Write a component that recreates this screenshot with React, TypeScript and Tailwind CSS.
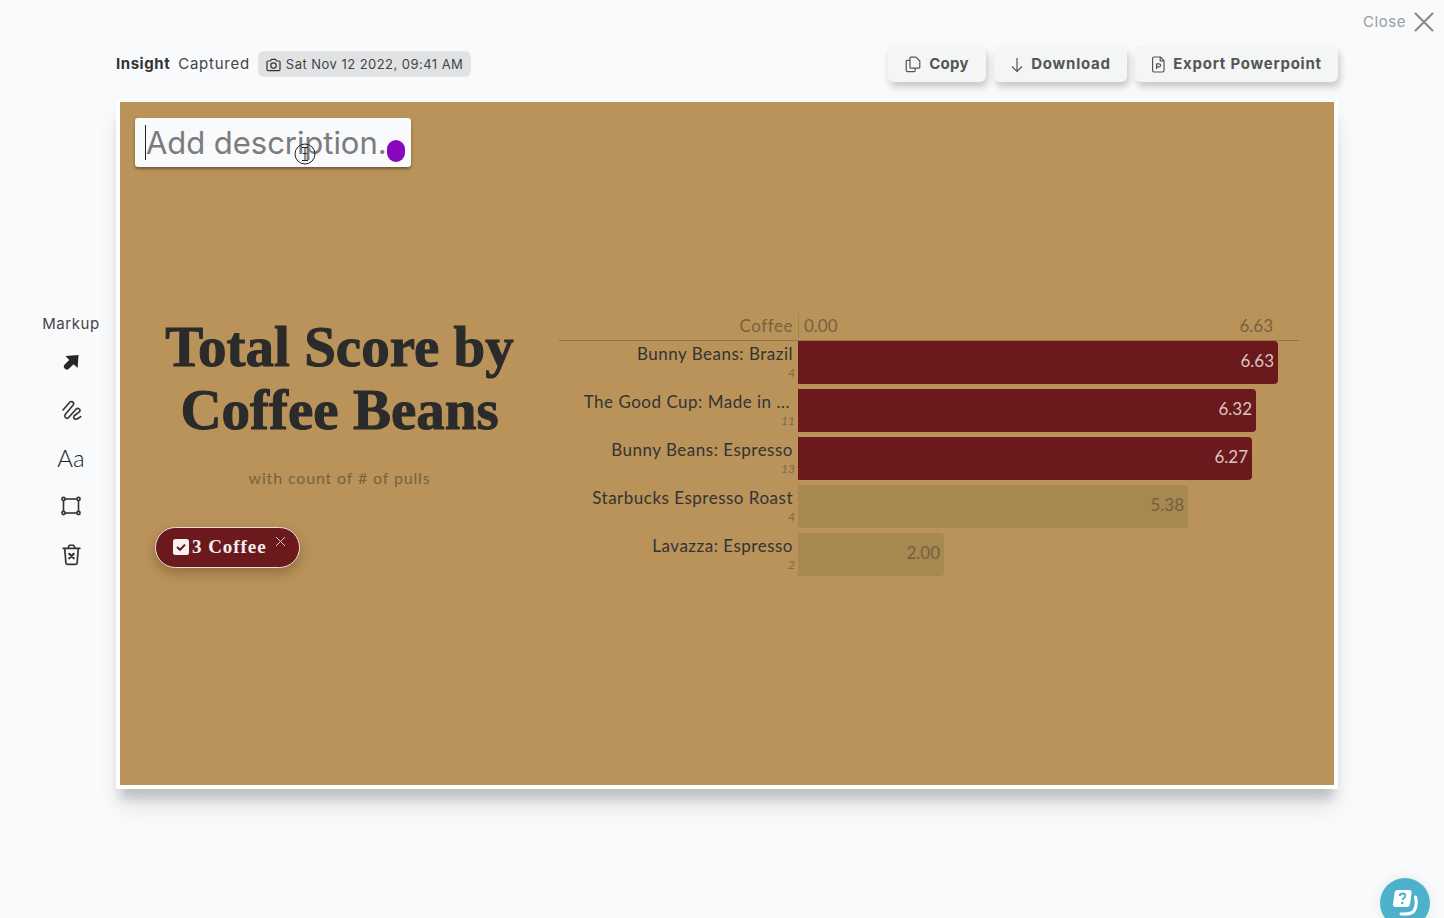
import React from "react";

const ui = "font-['Inter','Open_Sans',sans-serif]";
const chartFont = "font-['Lato','Noto_Sans',sans-serif]";

const rows = [
  { label: "Bunny Beans: Brazil", n: "4", v: "6.63", w: 480, on: true },
  { label: "The Good Cup: Made in ...", n: "11", v: "6.32", w: 458, on: true, pr: true },
  { label: "Bunny Beans: Espresso", n: "13", v: "6.27", w: 454, on: true },
  { label: "Starbucks Espresso Roast", n: "4", v: "5.38", w: 390, on: false },
  { label: "Lavazza: Espresso", n: "2", v: "2.00", w: 146, on: false },
];

function ArrowIcon() {
  return (
    <svg width="24" height="24" viewBox="0 0 24 24">
      <path d="M19.5 5 L18.6 18 L14.6 14.2 L9.6 19 Q8 20 6.4 19.2 L4.8 17.2 Q4.4 15.8 5.6 14.4 L10.2 10 L6.6 6 Z" fill="#262626" />
    </svg>
  );
}
function ScribbleIcon() {
  return (
    <svg width="24" height="24" viewBox="0 0 24 24" fill="none" stroke="#333" strokeWidth="1.6" strokeLinecap="round" strokeLinejoin="round">
      <path d="M4 12 L10.5 4.4 C12.5 2.4 15.6 4.4 14.4 6.8 L6.2 16.4 C4.6 18.6 7.2 21.4 9.4 19.8 L17 11.2 C19 9.4 22 11.4 20.6 13.6 L15 18 C13.6 20 16 22 18 21 L21.7 18.7" />
    </svg>
  );
}
function BoxIcon() {
  return (
    <svg width="24" height="24" viewBox="0 0 24 24" fill="none" stroke="#333" strokeWidth="1.6">
      <rect x="4.5" y="5" width="15" height="14" />
      <circle cx="4.5" cy="5" r="1.6" fill="#f9fafc" />
      <circle cx="19.5" cy="5" r="1.6" fill="#f9fafc" />
      <circle cx="4.5" cy="19" r="1.6" fill="#f9fafc" />
      <circle cx="19.5" cy="19" r="1.6" fill="#f9fafc" />
    </svg>
  );
}
function TrashIcon() {
  return (
    <svg width="27" height="27" viewBox="0 0 24 24" fill="none" stroke="#333" strokeWidth="1.5" strokeLinecap="round" strokeLinejoin="round">
      <path d="M4.5 6.5 H19.5 M9 6 L10 3.8 H14 L15 6" />
      <path d="M6 7 L7 19.4 Q7.2 20.8 8.6 20.8 H15.4 Q16.8 20.8 17 19.4 L18 7" />
      <path d="M10 11.4 L14 15.4 M14 11.4 L10 15.4" strokeWidth="1.9" />
    </svg>
  );
}
function CopyIcon() {
  return (
    <svg width="17" height="17" viewBox="0 0 17 17" fill="none" stroke="#555" strokeWidth="1.2" strokeLinejoin="round">
      <path d="M6 1.2 H11 L14.8 5 V11.2 Q14.8 12.2 13.8 12.2 H6 Q5 12.2 5 11.2 V2.2 Q5 1.2 6 1.2 Z" />
      <path d="M5 4.4 H2.2 Q1.2 4.4 1.2 5.4 V14.6 Q1.2 15.6 2.2 15.6 H9.2 Q10.2 15.6 10.2 14.6 V12.2" />
    </svg>
  );
}
function PptIcon() {
  return (
    <svg width="15" height="17" viewBox="0 0 15 17" fill="none" stroke="#555" strokeWidth="1.2" strokeLinejoin="round">
      <path d="M3 1 H9.4 L13 4.6 V14.6 Q13 16 11.6 16 H3 Q1.6 16 1.6 14.6 V2.4 Q1.6 1 3 1 Z" />
      <path d="M9.2 1 V4.8 H13" />
      <path d="M5.6 13 V7.8 H8 Q9.6 7.8 9.6 9.3 Q9.6 10.8 8 10.8 H5.6" strokeWidth="1.3" />
    </svg>
  );
}

function ActionButton({ icon, label, width, track }: { icon: React.ReactNode; label: string; width: string; track: string }) {
  return (
    <button className={`${width} ${track} flex h-[36px] items-center justify-center gap-[7px] rounded-[6px] bg-[#f4f5f5] pt-[1px] text-[15px] font-bold text-[#555555] shadow-[2px_5px_7px_rgba(0,0,0,0.2)]`}>
      {icon}
      <span>{label}</span>
    </button>
  );
}

export default function App() {
  return (
    <div className={`relative h-[918px] w-[1444px] overflow-hidden bg-[#f9fafc] ${ui}`}>
      <div className="flex h-[44px] items-center justify-end gap-[8px] pr-[10px]">
        <span className="text-[15px] tracking-[0.55px] text-[#9a9c9e]">Close</span>
        <svg width="20" height="20" viewBox="0 0 20 20" stroke="#858789" strokeWidth="2" fill="none">
          <path d="M1 1 L19 19 M19 1 L1 19" />
        </svg>
      </div>

      <div className="mt-[2px] flex h-[36px] items-center justify-between pl-[116px] pr-[106px]">
        <div className="flex items-center">
          <span className="pt-[1px] text-[15px] font-bold tracking-[0.55px] text-[#333333]">Insight</span>
          <span className="ml-[8px] pt-[1px] text-[15px] tracking-[0.75px] text-[#444444]">Captured</span>
          <span className="ml-[8px] flex h-[26px] items-center gap-[5px] rounded-[6px] bg-[#e1e2e4] pl-[8px] pr-[8px] pt-[1px] text-[13px] tracking-[0.46px] text-[#444444]">
            <svg width="15" height="14" viewBox="0 0 15 14" fill="none" stroke="#333" strokeWidth="1.2" strokeLinejoin="round">
              <path d="M1 4 Q1 3 2 3 H4.4 L5.4 1.4 H9.6 L10.6 3 H13 Q14 3 14 4 V11.6 Q14 12.6 13 12.6 H2 Q1 12.6 1 11.6 Z" />
              <circle cx="7.5" cy="7.6" r="2.7" />
            </svg>
            Sat Nov 12 2022, 09:41 AM
          </span>
        </div>
        <div className="flex items-center gap-[8px]">
          <ActionButton icon={<CopyIcon />} label="Copy" width="w-[98px]" track="tracking-[0.25px]" />
          <ActionButton
            icon={
              <svg width="14" height="16" viewBox="0 0 14 16" fill="none" stroke="#555" strokeWidth="1.2">
                <path d="M7 1 V14.5 M2 9.5 L7 14.5 L12 9.5" />
              </svg>
            }
            label="Download"
            width="w-[133px]"
            track="tracking-[0.75px]"
          />
          <ActionButton icon={<PptIcon />} label="Export Powerpoint" width="w-[203px]" track="tracking-[0.75px]" />
        </div>
      </div>

      <div className="mt-[16px] flex items-center">
        <aside className="flex w-[116px] flex-col items-center pl-[26px] pt-[6px]">
          <span className="mb-[5px] text-[15px] leading-[18px] tracking-[0.6px] text-[#444444]">Markup</span>
          <div className="flex h-[48px] items-center justify-center"><ArrowIcon /></div>
          <div className="flex h-[48px] items-center justify-center"><ScribbleIcon /></div>
          <div className="flex h-[48px] items-center justify-center font-['Lato',sans-serif] text-[24px] font-light text-[#222222]">Aa</div>
          <div className="flex h-[48px] items-center justify-center"><BoxIcon /></div>
          <div className="flex h-[48px] items-center justify-center"><TrashIcon /></div>
        </aside>

        <div className="relative flex h-[691px] w-[1222px] items-center border-4 border-t-[#f9fafc] border-x-white border-b-white bg-[#b99359] shadow-[0_14px_10px_-4px_rgba(0,0,0,0.17),0_24px_22px_-2px_rgba(0,0,0,0.06),0_10px_26px_rgba(0,0,0,0.03)]">
          <div className="absolute left-[15px] top-[16px] flex h-[49px] w-[276px] items-center rounded-[3px] bg-[#f9fafc] pl-[10px] shadow-[0_2px_3px_rgba(0,0,0,0.4)]">
            <span className="h-[35px] w-px bg-[#222222]" />
            <span className="text-[31px] leading-none tracking-[-0.05px] text-[#7c7c7c]">Add description.</span>
            <span className="absolute left-[252px] top-[22px] h-[22px] w-[18px] rounded-full bg-[#8708bd]" />
            <svg className="absolute left-[159px] top-[25px]" width="22" height="22" viewBox="0 0 22 22" fill="none" stroke="#222" strokeWidth="1">
              <circle cx="11" cy="11" r="10" />
              <path d="M8 4.5 H14 M8 17.5 H14 M11 4.5 V17.5 M9 10.5 H13" />
            </svg>
          </div>

          <div className="flex w-[439px] flex-col items-stretch pb-[5px]">
            <h1 className="text-center font-['Liberation_Serif',serif] text-[57px] font-bold leading-[63px] text-[#2b2b2b] [-webkit-text-stroke:1px_#2b2b2b]">
              Total Score by
              <br />
              Coffee Beans
            </h1>
            <p className={`mt-[25px] text-center text-[16px] leading-[24px] tracking-[0.85px] text-[#76623f] ${chartFont}`}>
              with count of # of pulls
            </p>
            <div className="relative ml-[35px] mt-[37px] flex h-[41px] w-[145px] items-center rounded-full border border-[#e8dcdc] bg-[#6b191c] pl-[17px] shadow-[0_5px_12px_rgba(60,30,0,0.3)]">
              <svg width="16" height="16" viewBox="0 0 16 16">
                <rect width="16" height="16" rx="2.5" fill="#f7f2f2" />
                <path d="M4 8 L7 10.8 L12 5.6" fill="none" stroke="#6b191c" strokeWidth="2" />
              </svg>
              <span className="ml-[3px] font-['Liberation_Serif',serif] text-[19px] font-bold tracking-[0.95px] text-[#f5eeee]">3 Coffee</span>
              <svg className="absolute right-[13px] top-[8px]" width="11" height="11" viewBox="0 0 11 11" stroke="#dcc6c6" strokeWidth="1" fill="none">
                <path d="M1 1 L10 10 M10 1 L1 10" />
              </svg>
            </div>
          </div>

          <div className={`flex w-[740px] flex-col pt-[2px] ${chartFont}`}>
            <div className="flex h-[28px] items-center border-b border-[#8f7549] pb-[2px]">
              <div className="w-[234px] text-right text-[17px] tracking-[0.55px] text-[#76623f]">Coffee</div>
              <div className="ml-[5px] flex h-full w-[475px] items-center justify-between border-l border-[#a3854f] pl-[5px] text-[17px] text-[#76623f]">
                <span>0.00</span>
                <span>6.63</span>
              </div>
            </div>
            <div className="flex flex-col gap-[5px]">
              {rows.map((r) => (
                <div key={r.label} className="flex h-[43px]">
                  <div className="relative w-[239px] pr-[5px] text-right">
                    <div className={`pt-[1px] text-[17px] leading-[24px] tracking-[0.5px] text-[#333333] ${r.pr ? "pr-[3px]" : ""}`}>{r.label}</div>
                    <div className="-mr-[2px] pt-[1px] text-[12px] italic leading-[12px] text-[#7e6a48]">{r.n}</div>
                  </div>
                  <div
                    className={`flex items-center justify-end rounded-r-[4px] pb-[4px] pr-[4px] text-[17px] ${r.on ? "bg-[#6b191c] text-[#d9c6c0]" : "bg-[#a78851] text-[#72603f]"}`}
                    style={{ width: r.w }}
                  >
                    {r.v}
                  </div>
                </div>
              ))}
            </div>
          </div>
        </div>
      </div>

      <div className="absolute left-[1380px] top-[878px] flex h-[50px] w-[50px] items-start justify-center rounded-full bg-[#4eb1cc] pt-[11px] shadow-[0_0_14px_rgba(0,0,0,0.08)]">
        <svg width="26" height="28" viewBox="0 0 26 28">
          <path d="M6 1 H17 Q20 1 19.6 4 L18 15 Q17.6 18 14.6 18 H3.6 Q.6 18 1 15 L2.6 4 Q3 1 6 1 Z" fill="#fff" />
          <path d="M7.6 7 Q8 4.4 10.8 4.4 Q13.6 4.6 13.2 7 Q13 8.6 11 9.6 L10.6 11" fill="none" stroke="#4eb1cc" strokeWidth="2" />
          <circle cx="10.3" cy="14" r="1.3" fill="#4eb1cc" />
          <path d="M23.5 8 Q25.6 16 22 22 Q19.4 25.6 9 25" fill="none" stroke="#fff" strokeWidth="3" strokeLinecap="round" />
        </svg>
      </div>
    </div>
  );
}
